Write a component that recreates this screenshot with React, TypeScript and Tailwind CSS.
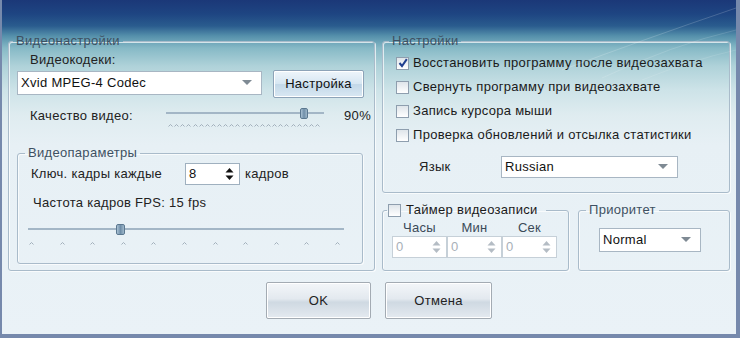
import React from "react";

const font = { fontFamily: '"Liberation Sans", Arial, sans-serif' };

function Arrow({ color = "#7f8a94" }: { color?: string }) {
  return (
    <svg width="10" height="6" viewBox="0 0 10 6">
      <path d="M0 0 L10 0 L5 5 Z" fill={color} />
    </svg>
  );
}

function Select({ text, className }: { text: string; className: string }) {
  return (
    <div
      className={`flex items-center justify-between border border-[#a8b6c3] bg-white pl-[3px] pr-[9px] text-[13px] text-[#111] ${className}`}
    >
      <span>{text}</span>
      <Arrow />
    </div>
  );
}

function Spin({ value, disabled, className }: { value: string; disabled?: boolean; className: string }) {
  const c = disabled ? "#b4bcc4" : "#111";
  return (
    <div
      className={`flex items-center justify-between border bg-white pl-[3px] pr-[5px] text-[13px] ${
        disabled ? "border-[#c6d0d8] bg-[#f7f9fb] text-[#a8b0b8]" : "border-[#9fb0bf] text-[#111]"
      } ${className}`}
    >
      <span>{value}</span>
      <svg width="9" height="14" viewBox="0 0 9 14">
        <path d="M4.5 1 L8.5 5.5 L0.5 5.5 Z" fill={c} />
        <path d="M4.5 13 L8.5 8.5 L0.5 8.5 Z" fill={c} />
      </svg>
    </div>
  );
}

function Check({ checked }: { checked?: boolean }) {
  return (
    <span className="relative flex h-[13px] w-[13px] shrink-0 items-center justify-center border border-[#8e9eae] bg-[linear-gradient(180deg,#dfe5ea,#ffffff)]">
      {checked && (
        <svg width="10" height="10" viewBox="0 0 10 10">
          <path d="M1.5 5 L4 8 L8.8 1.2" stroke="#1f3f8f" strokeWidth="2" fill="none" />
        </svg>
      )}
    </span>
  );
}

function Caret() {
  return (
    <svg width="5" height="3" viewBox="0 0 5 3">
      <path d="M0.5 2.5 L2.5 0.5 L4.5 2.5" stroke="#9aa8b4" strokeWidth="0.9" fill="none" />
    </svg>
  );
}

function Thumb({ left, w }: { left: number; w: number }) {
  return (
    <div
      className="absolute top-0 h-[11px] rounded-[2px] border border-[#5b7890] bg-[linear-gradient(90deg,#a9c1d4,#6f8ea8_50%,#9fb8cb)]"
      style={{ left, width: w }}
    />
  );
}

const legend = "text-[13px] leading-[16px] text-[#3e5062]";
const fs = "border border-[#a9bbca] rounded-[3px] shadow-[inset_1px_1px_0_rgba(255,255,255,0.7),1px_1px_0_rgba(255,255,255,0.7)]";

export default function App() {
  return (
    <div
      style={font}
      className="relative flex h-[338px] w-[740px] flex-col overflow-hidden border-b-[4px] border-l-[2px] border-r-[4px] border-[#7689ac] bg-[linear-gradient(180deg,#1b3878_0px,#1e4582_14px,#2a5c8e_26px,#5590ab_36px,#86b9c6_48px,#afd2d9_66px,#cde3e8_90px,#dfecf0_115px,#e7f0f5_145px,#eaf2f7_338px)] px-[6px] tracking-[0.3px] text-[#1a1a1a]"
    >
      <svg className="pointer-events-none absolute left-0 top-0" width="734" height="80" viewBox="0 0 734 80">
        <path d="M560 70 Q 640 40 734 8" stroke="#ffffff" strokeOpacity="0.18" strokeWidth="1" fill="none" />
        <path d="M600 78 Q 670 45 734 30" stroke="#ffffff" strokeOpacity="0.14" strokeWidth="1" fill="none" />
        <path d="M640 80 Q 690 60 734 50" stroke="#ffffff" strokeOpacity="0.12" strokeWidth="1" fill="none" />
      </svg>

      <div className="mt-[33px] flex gap-[7px]">
        {/* Left group */}
        <fieldset className={`h-[238px] w-[368px] ${fs}`}>
          <legend className={`ml-[4px] px-[3px] ${legend}`}>Видеонастройки</legend>
          <div className="ml-[21px] mt-[3px] text-[13px] leading-[16px] text-[#222]">Видеокодеки:</div>
          <div className="mt-[2px] flex items-start">
            <Select text="Xvid MPEG-4 Codec" className="ml-[8px] mt-[1px] h-[24px] w-[245px]" />
            <button className="ml-[11px] h-[28px] w-[91px] rounded-[2px] border border-[#8da3b8] bg-[linear-gradient(180deg,#eef5fb,#d6e6f2_50%,#c3d8e8_52%,#d9e8f3)] text-[13px] tracking-[0.3px] text-[#111] shadow-[inset_0_0_0_1px_#ffffff]">
              Настройка
            </button>
          </div>
          <div className="mt-[10px] flex items-start">
            <div className="ml-[21px] w-[136px] text-[13px] leading-[16px] text-[#222]">Качество видео:</div>
            <div className="relative h-[22px] w-[158px]">
              <div className="absolute left-0 right-0 top-[4px] h-[2px] bg-[#a3b6c6]" />
              <Thumb left={134} w={8} />
              <div className="absolute left-[2px] right-[4px] top-[16px] flex justify-between">
                {Array.from({ length: 25 }).map((_, i) => (
                  <Caret key={i} />
                ))}
              </div>
            </div>
            <div className="ml-auto mr-[3px] text-[13px] leading-[16px] text-[#222]">90%</div>
          </div>

          <fieldset className={`ml-[8px] mt-[15px] h-[119px] w-[346px] ${fs}`}>
            <legend className={`ml-[7px] px-[3px] ${legend}`}>Видеопараметры</legend>
            <div className="mt-[2px] flex h-[22px] items-center text-[13px] text-[#222]">
              <span className="ml-[13px] w-[154px]">Ключ. кадры каждые</span>
              <Spin value="8" className="h-[22px] w-[55px]" />
              <span className="ml-[5px]">кадров</span>
            </div>
            <div className="ml-[15px] mt-[10px] text-[13px] leading-[16px] text-[#222]">Частота кадров FPS: 15 fps</div>
            <div className="relative ml-[10px] mt-[13px] h-[24px] w-[316px]">
              <div className="absolute left-0 right-0 top-[4px] h-[2px] bg-[#a3b6c6]" />
              <Thumb left={88} w={9} />
              <div className="absolute left-[1px] right-[4px] top-[18px] flex justify-between">
                {Array.from({ length: 11 }).map((_, i) => (
                  <Caret key={i} />
                ))}
              </div>
            </div>
          </fieldset>
        </fieldset>

        {/* Right column */}
        <div className="flex w-[348px] flex-col">
          <fieldset className={`h-[160px] w-[348px] ${fs}`}>
            <legend className={`ml-[6px] px-[3px] ${legend}`}>Настройки</legend>
            <div className="mt-[2px] flex flex-col text-[13px] text-[#1a1a1a]">
              {[
                ["Восстановить программу после видеозахвата", true],
                ["Свернуть программу при видеозахвате", false],
                ["Запись курсора мыши", false],
                ["Проверка обновлений и отсылка статистики", false],
              ].map(([t, c]) => (
                <div key={t as string} className="flex h-[24px] items-center">
                  <span className="ml-[13px]">
                    <Check checked={c as boolean} />
                  </span>
                  <span className="ml-[4px]">{t as string}</span>
                </div>
              ))}
            </div>
            <div className="mt-[9px] flex h-[22px] items-center text-[13px] text-[#222]">
              <span className="ml-[36px] w-[82px]">Язык</span>
              <Select text="Russian" className="h-[22px] w-[177px]" />
            </div>
          </fieldset>

          <div className="mt-[8px] flex">
            <fieldset className={`h-[70px] w-[187px] ${fs}`}>
              <legend className="ml-[4px] flex h-[18px] items-center pl-[1px] pr-[8px] text-[13px] text-[#1a1a1a]">
                <Check />
                <span className="ml-[5px]">Таймер видеозаписи</span>
              </legend>
              <div className="ml-[9px] mt-[1px] flex">
                {["Часы", "Мин", "Сек"].map((l) => (
                  <div key={l} className="flex w-[55px] flex-col items-center">
                    <span className="text-[13px] leading-[16px] text-[#3b4a58]">{l}</span>
                    <Spin value="0" disabled className="h-[22px] w-[55px]" />
                  </div>
                ))}
              </div>
            </fieldset>
            <fieldset className={`ml-[9px] h-[70px] w-[152px] ${fs}`}>
              <legend className="ml-[7px] flex h-[18px] items-center px-[3px] text-[13px] text-[#3e5062]">Приоритет</legend>
              <Select text="Normal" className="ml-[20px] mt-[9px] h-[24px] w-[102px]" />
            </fieldset>
          </div>
        </div>
      </div>

      <div className="mt-[11px] flex">
        <button className="ml-[258px] h-[37px] w-[105px] rounded-[2px] border border-[#a3abb3] bg-[linear-gradient(180deg,#f3f6f9,#e3e9ef_45%,#cfd9e2_55%,#e4eaf0)] text-[13px] tracking-[0.3px] text-[#222] shadow-[inset_0_0_0_1px_#ffffff]">
          OK
        </button>
        <button className="ml-[14px] h-[37px] w-[107px] rounded-[2px] border border-[#a3abb3] bg-[linear-gradient(180deg,#f3f6f9,#e3e9ef_45%,#cfd9e2_55%,#e4eaf0)] text-[13px] tracking-[0.3px] text-[#222] shadow-[inset_0_0_0_1px_#ffffff]">
          Отмена
        </button>
      </div>
    </div>
  );
}
